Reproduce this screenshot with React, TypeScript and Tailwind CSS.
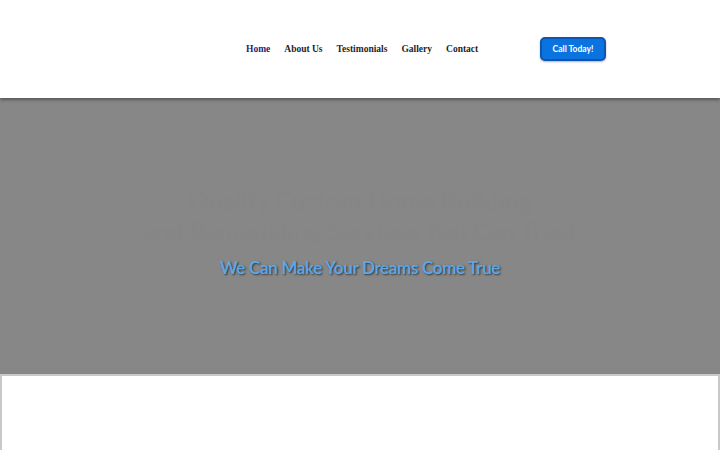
import React from 'react';

const navLinks = ['Home', 'About Us', 'Testimonials', 'Gallery', 'Contact'];

export default function App() {
  return (
    <div className="min-h-screen w-[720px] bg-white">
      {/* Header */}
      <header className="relative z-10 flex h-[98px] items-center bg-white shadow-[0_2px_3px_rgba(0,0,0,0.35)]">
        <nav className="ml-[246px] flex items-center gap-[14px] font-['Liberation_Serif',serif] text-[9.5px] font-bold">
          {navLinks.map((link, i) => (
            <a
              key={link}
              href="#"
              className={i === 0 ? 'text-[#23257a]' : 'text-[#1f1f1f]'}
            >
              {link}
            </a>
          ))}
        </nav>
        <button className="ml-auto mr-[114px] h-[24px] w-[66px] rounded-[5px] border-2 border-[#0a55b5] bg-[#0b73e0] font-['Lato',sans-serif] text-[8.5px] font-bold text-white shadow-[0_1px_2px_rgba(0,0,0,0.3)]">
          Call Today!
        </button>
      </header>

      {/* Hero */}
      <section className="flex h-[276px] flex-col items-center bg-[#878787] pt-[88px]">
        <h1 className="flex flex-col items-center gap-[1px] font-['Lato',sans-serif] text-[25px] font-bold leading-[29px] text-[#868686]">
          <span>Quality Custom Home Building</span>
          <span>and Remodeling Services You Can Trust</span>
        </h1>
        <p className="mt-[10px] font-['Lato',sans-serif] text-[17px] font-semibold tracking-[-0.3px] text-[#5aa8ec] [text-shadow:1px_1px_2px_rgba(0,0,0,0.6)]">
          We Can Make Your Dreams Come True
        </p>
      </section>

      {/* Content */}
      <section className="h-[76px] border-x-2 border-t-2 border-[#c9c9c9] bg-white"></section>
    </div>
  );
}
